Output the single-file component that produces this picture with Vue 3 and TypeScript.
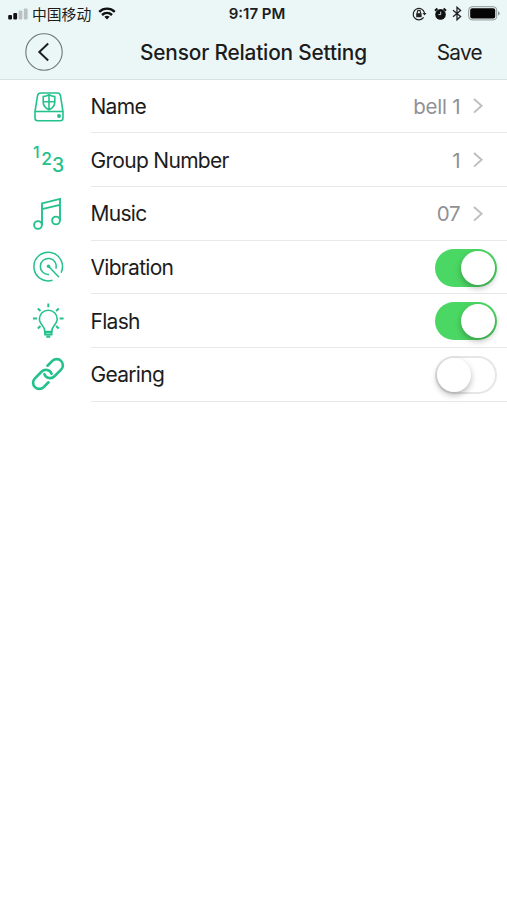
<script setup lang="ts">
import { ref } from 'vue'

type IconName = 'device' | 'numbers' | 'music' | 'vibration' | 'flash' | 'link'

interface Row {
  icon: IconName
  label: string
  value?: string
  on?: boolean
}

const rows = ref<Row[]>([
  { icon: 'device', label: 'Name', value: 'bell 1' },
  { icon: 'numbers', label: 'Group Number', value: '1' },
  { icon: 'music', label: 'Music', value: '07' },
  { icon: 'vibration', label: 'Vibration', on: true },
  { icon: 'flash', label: 'Flash', on: true },
  { icon: 'link', label: 'Gearing', on: false },
])

const toggle = (row: Row) => {
  row.on = !row.on
}
</script>

<template>
  <div class="screen">
    <header class="top">
      <div class="status">
        <div class="carrier">
          <svg class="signal" width="20" height="12" viewBox="0 0 20 12">
            <rect x="0.2" y="7" width="3.8" height="4.6" rx="1" fill="#111" />
            <rect x="5.3" y="5" width="3.8" height="6.6" rx="1" fill="#111" />
            <rect x="10.6" y="2.6" width="3.8" height="9" rx="1" fill="#b9c2c1" />
            <rect x="15.8" y="0.4" width="3.8" height="11.2" rx="1" fill="#b9c2c1" />
          </svg>
          <span class="operator">中国移动</span>
          <svg class="wifi" width="18" height="13" viewBox="0 0 18 13" fill="none" stroke="#111" stroke-width="2.4">
            <path d="M1.2 4.8C5.7.6 12.3.6 16.8 4.8" />
            <path d="M4 8C6.9 5.3 11.1 5.3 14 8" />
            <path d="M6.4 9.7C7.9 8.4 10.1 8.4 11.6 9.7L9 12.5Z" fill="#111" stroke="none" />
          </svg>
        </div>
        <span class="time">9:17 PM</span>
        <div class="indicators">
          <svg width="15" height="14" viewBox="0 0 15 14" fill="none" stroke="#222" stroke-width="1.2">
            <path d="M11.6 10.4A5.7 5.7 0 1 1 12.5 6" />
            <path d="M10.5 6h4l-2 2.6Z" fill="#222" stroke="none" />
            <rect x="4.2" y="6.2" width="5.4" height="4" fill="#222" stroke="none" />
            <path d="M5.3 6.4V5a1.6 1.6 0 0 1 3.2 0v1.4" />
          </svg>
          <svg class="alarm" width="13" height="14" viewBox="0 0 13 14">
            <circle cx="6.5" cy="7.4" r="5.3" fill="#111" />
            <path d="M1 3.7 3.4 1.6M12 3.7 9.6 1.6" stroke="#111" stroke-width="2" />
            <path d="M6.7 4.6v3H4.4" fill="none" stroke="#dfe8e8" stroke-width="0.9" />
          </svg>
          <svg class="bluetooth" width="10" height="15" viewBox="0 0 10 15" fill="none" stroke="#222" stroke-width="1.3">
            <path d="M1 4.2 8.6 10.5 5 13.8V1.2L8.6 4.5 1 10.8" />
          </svg>
          <svg class="battery" width="33" height="15" viewBox="0 0 33 15">
            <rect x="0.7" y="0.7" width="28" height="13.2" rx="3.4" fill="none" stroke="#8d9695" stroke-width="1" />
            <rect x="2.2" y="2.2" width="25" height="10.2" rx="2" fill="#050505" />
            <path d="M30 5.2q1.7.4 1.7 2.1T30 9.4Z" fill="#8d9695" />
          </svg>
        </div>
      </div>
      <nav class="bar">
        <button class="back" aria-label="Back">
          <svg width="38" height="38" viewBox="0 0 38 38" fill="none">
            <circle cx="19" cy="19" r="18.2" stroke="#6f7776" stroke-width="1.1" />
            <path d="M23.2 10.6 14.3 19l8.9 8.4" stroke="#1d2221" stroke-width="2" />
          </svg>
        </button>
        <h1 class="title">Sensor Relation Setting</h1>
        <button class="save">Save</button>
      </nav>
    </header>

    <main class="list">
      <div v-for="row in rows" :key="row.label" class="row">
        <svg class="icon" viewBox="0 0 40 40" width="40" height="40">
          <g v-if="row.icon === 'device'" transform="translate(1 0)">
            <path d="M6 24.5 8.5 8.8Q9 6 11.8 6h16.4q2.8 0 3.3 2.8L34 24.5V31q0 2.8-2.8 2.8H8.8Q6 33.8 6 31Z" />
            <path d="M6 24.5h28" />
            <path d="M20 7.8q2.8 1.6 5.8 1.8v5.4q0 5.2-5.8 7.8-5.8-2.6-5.8-7.8V9.6Q17.2 9.4 20 7.8ZM20 8v14.5M14.2 14.8h11.6" />
            <circle cx="30" cy="29" r="1.2" fill="#25c18c" />
          </g>
          <g v-else-if="row.icon === 'numbers'" class="digits">
            <text x="5" y="16.6" font-size="16">1</text>
            <text x="13.3" y="23.8" font-size="17.5">2</text>
            <text x="23.9" y="30.6" font-size="19.5">3</text>
          </g>
          <g v-else-if="row.icon === 'music'" stroke-width="1.9">
            <path d="M14 31V9.4L32 4.9v21.6M14 15.1l18-4.3" />
            <circle cx="10" cy="31" r="3.9" />
            <circle cx="28" cy="26.5" r="3.9" />
          </g>
          <g v-else-if="row.icon === 'vibration'" stroke-width="1.5" transform="translate(.5 -1.3)">
            <path d="M24 33.5A14.3 14.3 0 1 1 32.6 26" />
            <path d="M20.6 27.7A8 8 0 1 1 27.5 22" />
            <path d="m20 19.5 10.5 11" />
            <circle cx="20" cy="19.5" r="1.8" fill="#25c18c" stroke="none" />
          </g>
          <g v-else-if="row.icon === 'flash'" stroke-width="1.6" transform="translate(.3 -1.4)">
            <path d="M16.5 31q0-3-1.9-5.4C12.8 23.5 11.1 21.5 11.1 18.5a8.9 8.9 0 0 1 17.8 0c0 3-1.7 5-3.5 7.1Q23.5 28 23.5 31Z" />
            <path d="M16.8 31.5h6.4v2.5h-6.4ZM18 36.2h4" stroke-width="2" />
            <path d="M20 2.8v3.8M4.7 18h4M31.3 18h4M9.5 8l2.7 2.5M30.5 8l-2.7 2.5M9.5 28l2.7-2.5M30.5 28l-2.7-2.5" stroke-width="2" />
          </g>
          <g v-else stroke-width="2.6" stroke-linecap="round" transform="translate(20 19) rotate(-45)">
            <path d="M5.5 -6.2H12.3A6.2 6.2 0 0 1 12.3 6.2H3A6.2 6.2 0 0 1 -2.7 -2.4" />
            <path d="M-5.5 6.2H-12.3A6.2 6.2 0 0 1 -12.3 -6.2H-3A6.2 6.2 0 0 1 2.7 2.4" />
          </g>
        </svg>
        <div class="content">
          <span class="label">{{ row.label }}</span>
          <template v-if="row.value">
            <span class="value">{{ row.value }}</span>
            <svg class="chevron" width="12" height="18" viewBox="0 0 12 18">
              <path d="m2 2 7.6 6.8L2 15.6" fill="none" stroke="#bebec1" stroke-width="1.9" />
            </svg>
          </template>
          <button v-else class="switch" :class="{ on: row.on }" role="switch" :aria-checked="row.on" :aria-label="row.label" @click="toggle(row)">
            <span class="knob"></span>
          </button>
        </div>
      </div>
    </main>
  </div>
</template>

<style>
body {
  margin: 0;
  background: #fff;
}
</style>

<style scoped>
.screen {
  width: 100%;
  min-height: 900px;
  background: #fff;
  color: #1c1c1c;
  font-family: Inter, "Noto Sans CJK SC", sans-serif;
}
button {
  border: 0;
  padding: 0;
  background: none;
  font: inherit;
  color: inherit;
}
svg {
  display: block;
  flex: none;
}
.top {
  box-sizing: border-box;
  height: 79.5px;
  background: #ebf6f6;
  border-bottom: 1px solid #d9e1e1;
}
.status {
  display: grid;
  grid-template-columns: 1fr auto 1fr;
  align-items: center;
  height: 27px;
  padding: 0 6px 0 8px;
}
.carrier,
.indicators {
  display: flex;
  align-items: center;
}
.operator {
  margin-left: 4px;
  font-family: "Noto Sans CJK SC", sans-serif;
  font-size: 14.8px;
  line-height: 25px;
}
.wifi {
  margin-left: 7px;
}
.time {
  padding-left: 5px;
  font-size: 15px;
  font-weight: 600;
}
.indicators {
  justify-content: flex-end;
}
.alarm {
  margin-left: 7px;
}
.bluetooth {
  margin-left: 5px;
}
.battery {
  margin-left: 6px;
}
.bar {
  display: grid;
  grid-template-columns: 1fr auto 1fr;
  align-items: center;
  height: 50px;
  padding: 0 25px;
}
.back {
  justify-self: start;
}
.title {
  margin: 0;
  padding-top: 1px;
  font-size: 20.8px;
  font-weight: 550;
  line-height: 26px;
  letter-spacing: -0.17px;
}
.save {
  justify-self: end;
  padding-top: 1px;
  font-size: 20.8px;
  line-height: 26px;
  letter-spacing: -0.7px;
}
.row {
  box-sizing: border-box;
  display: flex;
  align-items: center;
  height: 53.7px;
  padding: 1.2px 0 0 28px;
}
.icon {
  fill: none;
  stroke: #25c18c;
  stroke-width: 1.6;
}
.digits {
  fill: #25c18c;
  stroke: none;
  font-weight: 500;
}
.content {
  box-sizing: border-box;
  display: flex;
  flex: 1;
  align-items: center;
  height: 100%;
  margin-left: 22.5px;
  padding-right: 10px;
  border-bottom: 1px solid #e8e8ea;
}
.label {
  flex: 1;
  font-size: 21px;
  letter-spacing: -0.7px;
}
.value {
  font-size: 20.5px;
  letter-spacing: -0.2px;
  color: #919194;
}
.chevron {
  margin: 0 13px 0 11.5px;
}
.switch {
  box-sizing: border-box;
  width: 62.5px;
  height: 38px;
  padding: 2px;
  border-radius: 19px;
  background: #fff;
  box-shadow: inset 0 0 0 2px #e6e6e8;
}
.switch.on {
  background: #4bd763;
  box-shadow: none;
}
.knob {
  display: block;
  width: 34px;
  height: 34px;
  border-radius: 50%;
  background: #fff;
  box-shadow: 0 3px 6px rgba(0, 0, 0, 0.28);
}
.on .knob {
  margin-left: 24.5px;
}
</style>
